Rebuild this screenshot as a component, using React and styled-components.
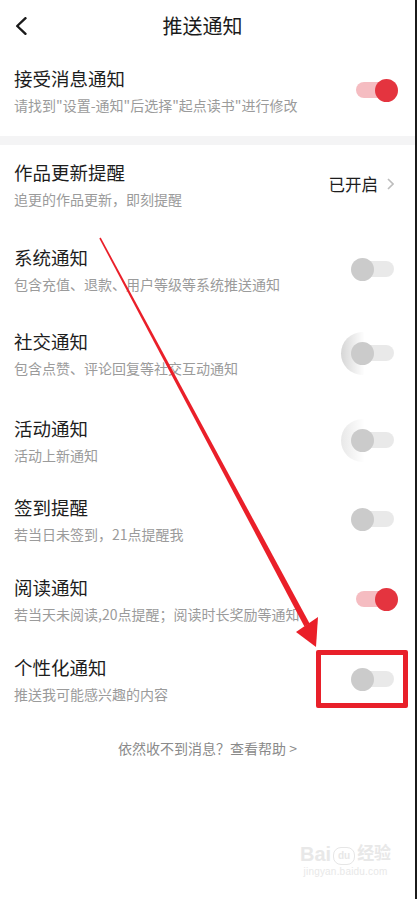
import React from "react";
import styled, { createGlobalStyle } from "styled-components";

const GlobalStyle = createGlobalStyle`
  html, body {
    margin: 0;
    padding: 0;
    background: #fff;
  }
  body {
    font-family: "Noto Sans CJK SC", "Noto Sans", sans-serif;
    color: #1d1d1d;
  }
`;

const Page = styled.div`
  position: relative;
  width: 417px;
  height: 899px;
  box-sizing: border-box;
  border-right: 2px solid #1b1b1b;
  background: #fff;
  overflow: hidden;
`;

const Header = styled.header`
  display: grid;
  grid-template-columns: 1fr auto 1fr;
  align-items: center;
  height: 51px;
  padding: 0 25px 0 15px;
`;

const BackButton = styled.button`
  display: flex;
  align-items: center;
  justify-self: start;
  padding: 0;
  border: 0;
  background: none;
  cursor: pointer;
`;

const Title = styled.h1`
  margin: 0;
  font-size: 20px;
  font-weight: 400;
  line-height: 28px;
  color: #1a1a1a;
`;

const Section = styled.section`
  padding-bottom: ${({ $pb }) => $pb || 0}px;
`;

const Divider = styled.div`
  height: 9px;
  background: #f4f4f5;
`;

const Row = styled.div`
  box-sizing: border-box;
  height: ${({ $h }) => $h}px;
  padding: 14px 20px 0 14px;
`;

const RowInner = styled.div`
  display: flex;
  align-items: center;
`;

const TextBlock = styled.div`
  flex: 1;
  min-width: 0;
`;

const ItemTitle = styled.div`
  font-size: 18.5px;
  line-height: 26px;
  color: #1d1d1d;
`;

const ItemDesc = styled.div`
  margin-top: 4px;
  font-size: 14px;
  line-height: 20px;
  color: #9b9b9b;
  white-space: nowrap;
`;

const LinkValue = styled.div`
  display: flex;
  align-items: center;
  gap: 9px;
  margin-right: 1px;
  font-size: 16.5px;
  color: #1d1d1d;
`;

const ToggleWrap = styled.div`
  position: relative;
  z-index: 0;
  flex-shrink: 0;
  width: 47px;
  height: 23px;
  margin-right: -3px;
`;

const Track = styled.div`
  position: absolute;
  left: 5px;
  top: 3.5px;
  width: 38px;
  height: 16px;
  border-radius: 8px;
  background: ${({ $on }) => ($on ? "#f5bcc1" : "#e9e9e9")};
`;

const Thumb = styled.div`
  position: absolute;
  top: 0;
  left: ${({ $on }) => ($on ? 24 : 0)}px;
  width: 23px;
  height: 23px;
  border-radius: 50%;
  background: ${({ $on }) => ($on ? "#e4343f" : "#cbcbcb")};
`;

const Ripple = styled.div`
  position: absolute;
  left: -10px;
  top: -10px;
  width: 43px;
  height: 43px;
  border-radius: 50%;
  background: linear-gradient(
    to right,
    rgba(0, 0, 0, ${({ $strength }) => $strength}) 0%,
    rgba(0, 0, 0, 0) 55%
  );
`;

const Footer = styled.div`
  margin-top: 28px;
  text-align: center;
  font-size: 14px;
  line-height: 20px;
  color: #8a8a8a;
`;

const Overlay = styled.svg`
  position: absolute;
  left: 0;
  top: 0;
  pointer-events: none;
`;

const HighlightBox = styled.div`
  position: absolute;
  left: 316px;
  top: 650px;
  width: 92px;
  height: 58px;
  box-sizing: border-box;
  border: 5px solid #e8202a;
  border-radius: 2px;
  pointer-events: none;
`;

const Watermark = styled.div`
  position: absolute;
  left: 300px;
  top: 843px;
  display: flex;
  flex-direction: column;
  align-items: center;
  color: #e8e8e8;
  font-family: "Liberation Sans", "Noto Sans CJK SC", sans-serif;
  pointer-events: none;
`;

const MarkTop = styled.div`
  display: flex;
  align-items: flex-end;
  gap: 2px;
  font-size: 20px;
  font-weight: 700;
  line-height: 22px;
`;

const PawBadge = styled.span`
  display: inline-flex;
  align-items: center;
  justify-content: center;
  width: 20px;
  height: 16px;
  border-radius: 8px;
  border: 1.5px solid #e6e6e6;
  font-size: 10px;
  line-height: 1;
`;

const MarkSub = styled.div`
  font-size: 10px;
  line-height: 14px;
  letter-spacing: 0.2px;
`;

const Toggle = ({ on, ripple }) => (
  <ToggleWrap>
    {ripple ? <Ripple $strength={ripple} /> : null}
    <Track $on={on} />
    <Thumb $on={on} />
  </ToggleWrap>
);

const items = [
  { title: "作品更新提醒", desc: "追更的作品更新，即刻提醒", link: "已开启", h: 85 },
  { title: "系统通知", desc: "包含充值、退款、用户等级等系统推送通知", on: false, h: 84 },
  { title: "社交通知", desc: "包含点赞、评论回复等社交互动通知", on: false, ripple: 0.16, h: 87 },
  { title: "活动通知", desc: "活动上新通知", on: false, ripple: 0.09, h: 79 },
  { title: "签到提醒", desc: "若当日未签到，21点提醒我", on: false, h: 80 },
  { title: "阅读通知", desc: "若当天未阅读,20点提醒；阅读时长奖励等通知", on: true, h: 80 },
  { title: "个性化通知", desc: "推送我可能感兴趣的内容", on: false, h: 70 },
];

const SettingRow = ({ title, desc, on, ripple, link, h }) => (
  <Row $h={h}>
    <RowInner>
      <TextBlock>
        <ItemTitle>{title}</ItemTitle>
        <ItemDesc>{desc}</ItemDesc>
      </TextBlock>
      {link ? (
        <LinkValue>
          {link}
          <svg width="7" height="12" viewBox="0 0 7 12">
            <polyline points="1,1 6,6 1,11" fill="none" stroke="#bdbdbd" strokeWidth="1.6" />
          </svg>
        </LinkValue>
      ) : (
        <Toggle on={on} ripple={ripple} />
      )}
    </RowInner>
  </Row>
);

export default function App() {
  return (
    <Page>
      <GlobalStyle />
      <Header>
        <BackButton aria-label="返回">
          <svg width="12" height="18" viewBox="0 0 12 18">
            <polyline
              points="10.5,1.2 2.2,9 10.5,16.8"
              fill="none"
              stroke="#1a1a1a"
              strokeWidth="2.4"
              strokeLinecap="round"
              strokeLinejoin="round"
            />
          </svg>
        </BackButton>
        <Title>推送通知</Title>
        <span />
      </Header>

      <Section $pb={0}>
        <SettingRow
          title="接受消息通知"
          desc={'请找到"设置-通知"后选择"起点读书"进行修改'}
          on
          h={85}
        />
      </Section>
      <Divider />

      <Section>
        {items.map((item) => (
          <SettingRow key={item.title} {...item} />
        ))}
      </Section>

      <Footer>依然收不到消息？查看帮助 &gt;</Footer>

      <HighlightBox />

      <Overlay width="417" height="899" viewBox="0 0 417 899">
        <polygon
          points="100.7,237.6 309.6,623.6 304.4,626.4 99.3,238.4"
          fill="#ea1f29"
        />
        <polygon points="296,632 318,617 316,647" fill="#ea1f29" />
      </Overlay>

      <Watermark>
        <MarkTop>
          <span>Bai</span>
          <PawBadge>du</PawBadge>
          <span style={{ fontSize: 17 }}>经验</span>
        </MarkTop>
        <MarkSub>jingyan.baidu.com</MarkSub>
      </Watermark>
    </Page>
  );
}
